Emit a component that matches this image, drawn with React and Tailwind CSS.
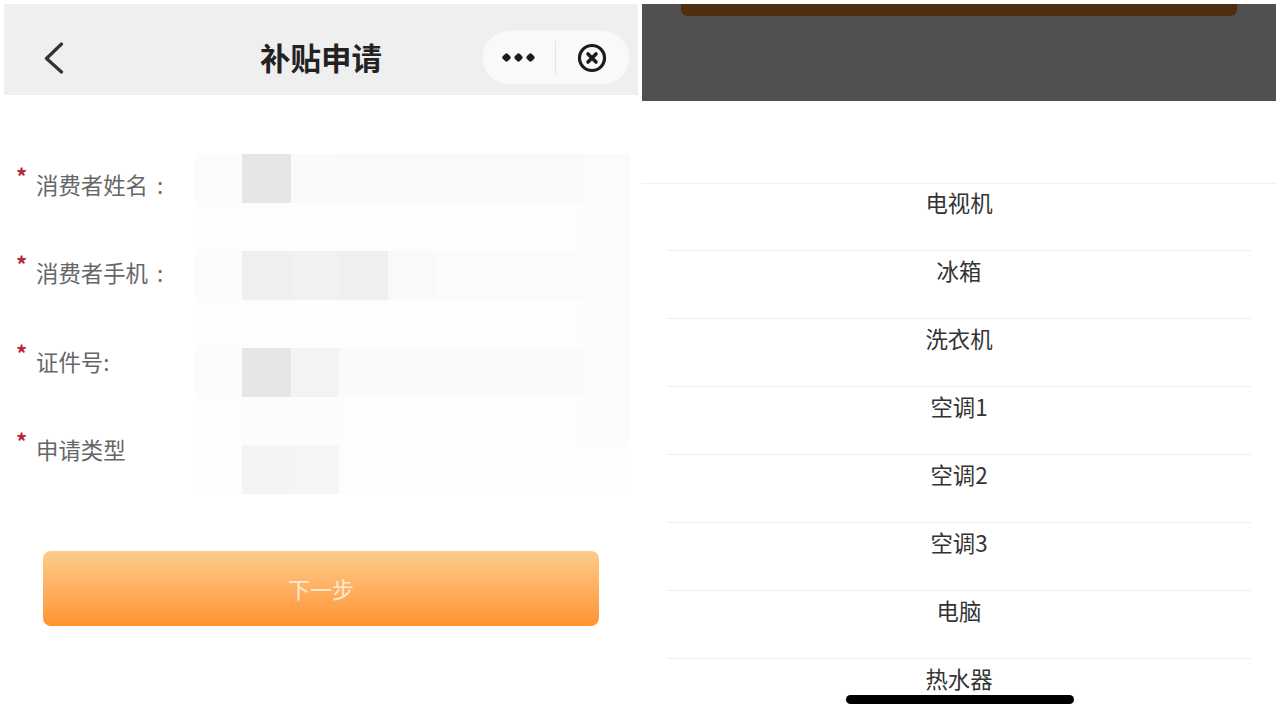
import React from "react";

const FONT = "font-['Noto_Sans_CJK_SC','Noto_Sans',sans-serif]";

const LABELS = [
  { text: "消费者姓名", colon: true },
  { text: "消费者手机", colon: true },
  { text: "证件号:" },
  { text: "申请类型" },
];
const PRODUCTS = ["电视机", "冰箱", "洗衣机", "空调1", "空调2", "空调3", "电脑", "热水器"];

// blurred-out input values, 9 x 7 mosaic cells
const MOSAIC = [
  "bg-[#fcfcfc]", "bg-[#e6e6e6]", "bg-[#fafafa]", "bg-[#f9f9f9]", "bg-[#f9f9f9]", "bg-[#f9f9f9]", "bg-[#f9f9f9]", "bg-[#f9f9f9]", "bg-[#fbfbfb]",
  "bg-[#fdfdfd]", "bg-[#fdfdfd]", "bg-[#fdfdfd]", "bg-[#fdfdfd]", "bg-[#fdfdfd]", "bg-[#fdfdfd]", "bg-[#fdfdfd]", "bg-[#fdfdfd]", "bg-[#fcfcfc]",
  "bg-[#fcfcfc]", "bg-[#efefef]", "bg-[#f1f1f1]", "bg-[#efefef]", "bg-[#f9f9f9]", "bg-[#fbfbfb]", "bg-[#fbfbfb]", "bg-[#fbfbfb]", "bg-[#fbfbfb]",
  "bg-[#fdfdfd]", "bg-[#fdfdfd]", "bg-[#fdfdfd]", "bg-[#fdfdfd]", "bg-[#fdfdfd]", "bg-[#fdfdfd]", "bg-[#fdfdfd]", "bg-[#fdfdfd]", "bg-[#fcfcfc]",
  "bg-[#fcfcfc]", "bg-[#e6e6e6]", "bg-[#f3f3f3]", "bg-[#fafafa]", "bg-[#fafafa]", "bg-[#fafafa]", "bg-[#fafafa]", "bg-[#fafafa]", "bg-[#fbfbfb]",
  "bg-[#fdfdfd]", "bg-[#fcfcfc]", "bg-[#fcfcfc]", "bg-[#fdfdfd]", "bg-[#fdfdfd]", "bg-[#fdfdfd]", "bg-[#fdfdfd]", "bg-[#fdfdfd]", "bg-[#fcfcfc]",
  "bg-[#fdfdfd]", "bg-[#f3f5f4]", "bg-[#f4f6f5]", "bg-[#fdfdfd]", "bg-[#fdfdfd]", "bg-[#fdfdfd]", "bg-[#fdfdfd]", "bg-[#fdfdfd]", "bg-[#fdfdfd]",
];

function BackIcon() {
  return (
    <svg width="20" height="32" viewBox="0 0 20 32" fill="none" stroke="#333" strokeWidth="3.2" strokeLinecap="round" strokeLinejoin="round">
      <path d="M17.5 2L2.5 16.5 17.5 30" />
    </svg>
  );
}

function CloseIcon() {
  return (
    <svg width="30" height="30" viewBox="0 0 30 30" fill="none" stroke="#1c1c1c">
      <circle cx="15" cy="15" r="12.5" strokeWidth="3.2" />
      <path d="M11 11l8 8M19 11l-8 8" strokeWidth="3.6" strokeLinecap="round" />
    </svg>
  );
}

function MoreDots() {
  return (
    <div className="flex gap-[5px]">
      <span className="w-[7px] h-[7px] rotate-45 rounded-[2px] bg-[#1c1c1c]" />
      <span className="w-[7px] h-[7px] rotate-45 rounded-[2px] bg-[#1c1c1c]" />
      <span className="w-[7px] h-[7px] rotate-45 rounded-[2px] bg-[#1c1c1c]" />
    </div>
  );
}

function FormPanel() {
  return (
    <div className="w-[634px] h-full flex flex-col">
      <header className="h-[91px] shrink-0 bg-[#efefef] flex items-center relative pt-[16px] pl-[40px] pr-[8px]">
        <BackIcon />
        <h1 className="absolute left-0 right-0 top-[29px] text-center text-[30.5px] leading-[48px] font-bold text-[#222]">补贴申请</h1>
        <div className="ml-auto w-[148px] h-[55px] rounded-full bg-[#f9f9f9] border border-[#f3f3f3] flex items-center pl-[20px]">
          <MoreDots />
          <div className="w-px h-[34px] bg-[#e4e4e4] ml-[21px]" />
          <div className="ml-[21px]">
            <CloseIcon />
          </div>
        </div>
      </header>

      <div className="flex pt-[59px] shrink-0">
        <div className="w-[190px] h-[340px] flex flex-col">
          {LABELS.map((label) => (
            <div key={label.text} className="h-[88.4px] shrink-0 flex pl-[12px] pt-[14px]">
              <span className="w-[20px] -mt-[4px] text-[#b8263a] text-[22px] leading-[22px] font-bold">*</span>
              <span className="text-[22.4px] leading-[32px] text-[#666] whitespace-nowrap">
                {label.text}
                {label.colon && <span className="ml-[9px]">:</span>}
              </span>
            </div>
          ))}
        </div>
        <div className="w-[436px] h-[340px] grid grid-cols-9 grid-rows-7">
          {MOSAIC.map((cls, i) => (
            <div key={i} className={cls} />
          ))}
        </div>
      </div>

      <button className="mt-[57px] ml-[39px] w-[556px] h-[75px] shrink-0 rounded-[8px] bg-gradient-to-b from-[#fdcc8a] to-[#fe932e] text-[#fdeacf] text-[22px]">
        下一步
      </button>
    </div>
  );
}

function ProductPanel() {
  return (
    <div className="w-[634px] h-full flex flex-col relative">
      <div className="h-[97px] shrink-0 bg-[#505050] px-[39px]">
        <div className="h-[12px] bg-[#4d2e12] rounded-b-[6px]" />
      </div>
      <div className="h-[82px] shrink-0" />
      <div className="border-t border-[#f2f2f2] shrink-0">
        <div className="-mt-px">
          {PRODUCTS.map((name) => (
            <div key={name} className="h-[68px] mx-[25px] text-center text-[22.4px] leading-[38px] text-[#333] border-b border-[#efefef]">
              {name}
            </div>
          ))}
        </div>
      </div>
      <div className="absolute left-[204px] top-[691px] w-[228px] h-[9px] rounded-full bg-black" />
    </div>
  );
}

export default function App() {
  return (
    <div className={`w-[1280px] h-[720px] overflow-hidden bg-white flex gap-[4px] px-[4px] pt-[4px] ${FONT}`}>
      <FormPanel />
      <ProductPanel />
    </div>
  );
}
